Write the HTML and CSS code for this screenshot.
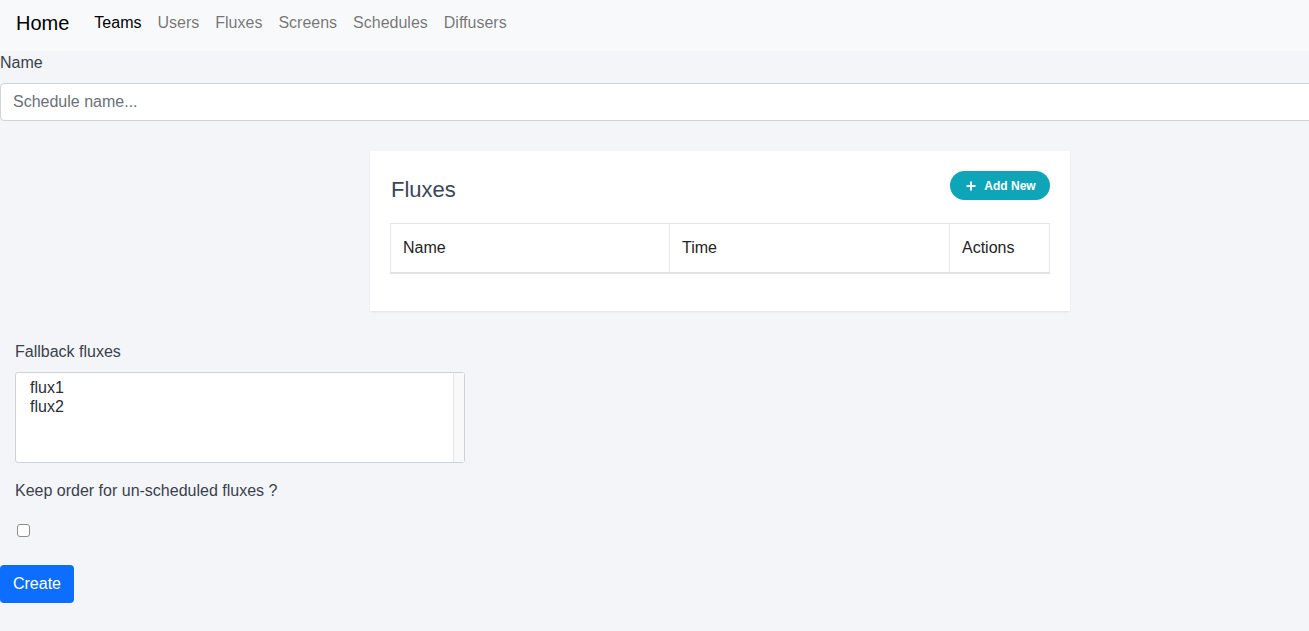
FILE: index.html
```html
<!DOCTYPE html>
<html>
<head>
<meta charset="utf-8">
<link rel="stylesheet" href="styles.css">
</head>
<body>
<nav class="navbar">
  <a class="brand">Home</a>
  <a class="nav-link active">Teams</a>
  <a class="nav-link">Users</a>
  <a class="nav-link">Fluxes</a>
  <a class="nav-link">Screens</a>
  <a class="nav-link">Schedules</a>
  <a class="nav-link">Diffusers</a>
</nav>
<main class="page">
  <div class="name-group">
    <label class="label">Name</label>
    <div class="input-wrap"><input class="input" type="text" placeholder="Schedule name..."></div>
  </div>

  <section class="card">
    <div class="card-head">
      <h2 class="card-title">Fluxes</h2>
      <button class="btn-add"><svg width="10" height="10" viewBox="0 0 10 10"><path d="M5 0.5v9M0.5 5h9" stroke="#fff" stroke-width="2"/></svg><span>Add New</span></button>
    </div>
    <table class="table">
      <thead>
        <tr><th class="c-name">Name</th><th class="c-time">Time</th><th class="c-act">Actions</th></tr>
      </thead>
    </table>
  </section>

  <div class="fallback">
    <label class="label">Fallback fluxes</label>
    <div class="listbox">
      <div class="options">
        <div class="option">flux1</div>
        <div class="option">flux2</div>
      </div>
      <div class="scroll-track"></div>
    </div>
    <label class="label keep">Keep order for un-scheduled fluxes ?</label>
    <div class="check-row"><span class="checkbox"></span></div>
  </div>

  <button class="btn-create">Create</button>
</main>
</body>
</html>
```

FILE: styles.css
```css
* { box-sizing: border-box; }
html, body { margin: 0; padding: 0; }
body {
  background: #f4f5f9;
  font-family: "Liberation Sans", Arial, sans-serif;
  font-size: 16px;
  color: #3a414d;
  overflow: hidden;
}
.navbar {
  background: #f8f9fb;
  height: 51px;
  padding: 11px 16px 16px;
  display: flex;
  align-items: center;
  line-height: 24px;
}
.brand {
  font-size: 20px;
  color: #000;
  margin-right: 17px;
}
.nav-link {
  padding: 0 8px;
  color: rgba(0,0,0,0.55);
}
.nav-link.active { color: #000; }

.page { display: flex; flex-direction: column; align-items: flex-start; }
.name-group { width: 100%; display: flex; flex-direction: column; }
.label { display: block; line-height: 24px; color: #3a414d; }
.input-wrap { margin-top: 8px; width: 100%; overflow: hidden; }
.input {
  display: block;
  width: calc(100% + 20px);
  height: 38px;
  border: 1px solid #ced4da;
  border-radius: 4px;
  padding: 6px 12px;
  font: 16px "Liberation Sans", Arial, sans-serif;
  background: #fff;
  outline: none;
}
.input::placeholder { color: #6b7079; }

.card {
  margin: 30px 0 0 370px;
  width: 700px;
  background: #fff;
  padding: 20px 20px 37px 20px;
  box-shadow: 0 1px 2px rgba(0,0,0,0.08);
}
.card-head {
  display: flex;
  justify-content: space-between;
  align-items: center;
  height: 30px;
  margin-bottom: 22px;
}
.card-title {
  margin: 0 0 0 1px;
  font-size: 22px;
  font-weight: normal;
  color: #3b4659;
  padding-top: 7px;
}
.btn-add {
  background: #0fa5b9;
  color: #fff;
  border: none;
  border-radius: 15px;
  height: 29px;
  width: 100px;
  display: flex;
  align-items: center;
  justify-content: center;
  gap: 8px;
  font: bold 12px "Liberation Sans", Arial, sans-serif;
  padding: 0 0 0 2px;
  margin-top: -1px;
}
.table {
  width: 100%;
  border-collapse: collapse;
  table-layout: fixed;
}
.table th {
  text-align: left;
  font-weight: normal;
  color: #1f2328;
  padding: 12px 12px;
  line-height: 24px;
  border: 1px solid #e4e6ea;
  border-bottom: 2px solid #e2e3e6;
}
.c-name { width: 279px; }
.c-time { width: 280px; }

.fallback { padding-left: 15px; margin-top: 29px; }
.listbox {
  margin-top: 8px;
  width: 450px;
  height: 91px;
  border: 1px solid #cdd2d9;
  border-radius: 3px;
  background: #fff;
  display: flex;
}
.options { flex: 1; padding: 5px 14px; }
.option { line-height: 19px; color: #2a2f36; }
.scroll-track {
  width: 11px;
  background: #f9f9f9;
  border-left: 1px solid #e6e6e6;
}
.keep { margin-top: 16px; }
.check-row { margin-top: 21px; padding-left: 2px; height: 14px; }
.checkbox {
  display: block;
  width: 13px;
  height: 13px;
  border: 1px solid #8d8d8d;
  border-radius: 3px;
  background: #fff;
}
.btn-create {
  margin-top: 27px;
  height: 38px;
  width: 74px;
  background: #0d6efd;
  color: #fff;
  border: none;
  border-radius: 4px;
  font: 16px "Liberation Sans", Arial, sans-serif;
}
```
